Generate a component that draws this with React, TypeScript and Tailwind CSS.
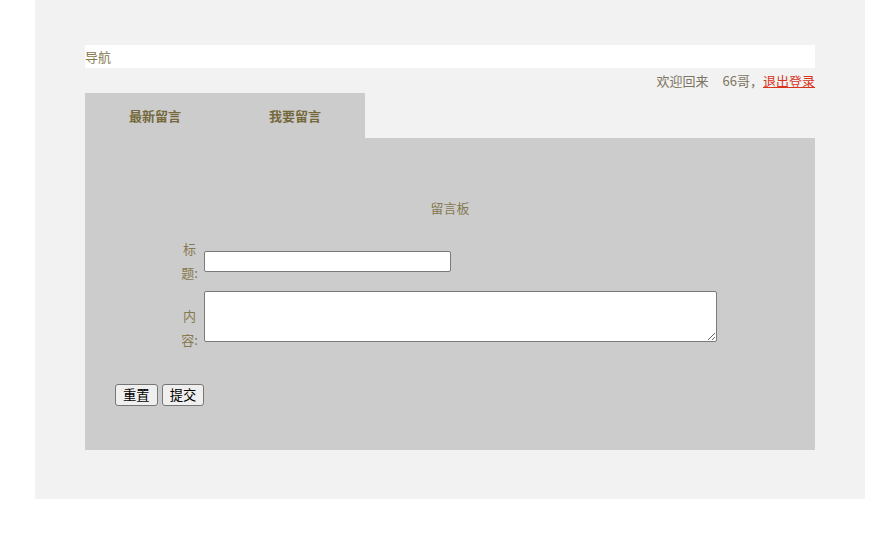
const font = { fontFamily: '"Noto Sans CJK SC", "Microsoft YaHei", sans-serif' };

const tabs = ["最新留言", "我要留言"];

const App = () => {
  return (
    <div className="min-h-[549px] bg-white" style={font}>
      <div className="ml-[35px] w-[830px] bg-[#f2f2f2] px-[50px] pt-[45px] pb-[49px] text-[13px] text-[#86794f]">
        <div className="h-[23px] bg-white leading-[23px]">导航</div>

        <div className="flex h-[25px] items-center justify-end text-[#7d7561]">
          <span>欢迎回来</span>
          <span className="ml-[14px]">66哥，</span>
          <a href="#" className="text-[#d9341c] underline">
            退出登录
          </a>
        </div>

        <div className="flex">
          {tabs.map((t) => (
            <div
              key={t}
              className="flex h-[45px] w-[140px] items-center justify-center bg-[#cccccc] font-bold text-[#75683a]"
            >
              {t}
            </div>
          ))}
        </div>

        <div className="bg-[#cccccc] pt-[60px] pb-[44px]">
          <div className="text-center leading-[20px]">留言板</div>

          <div className="mt-[19px] flex items-center pl-[90px]">
            <div className="w-[29px] text-center leading-[24px]">
              标<br />题:
            </div>
            <input
              type="text"
              className="h-[21px] w-[247px] rounded-[2px] border border-[#7a7a7a] bg-white px-1 text-[13px]"
            />
          </div>

          <div className="mt-[6px] flex items-start pl-[90px]">
            <div className="mt-[13px] w-[29px] text-center leading-[24px]">
              内<br />容:
            </div>
            <textarea className="h-[51px] w-[513px] rounded-[2px] border border-[#7a7a7a] bg-white px-1 text-[13px]" />
          </div>

          <div className="mt-[32px] flex gap-[4px] pl-[30px]">
            <button className="h-[22px] rounded-[3px] border border-[#767676] bg-[#efefef] px-[7px] text-[13.33px] leading-none text-black">
              重置
            </button>
            <button className="h-[22px] rounded-[3px] border border-[#767676] bg-[#efefef] px-[7px] text-[13.33px] leading-none text-black">
              提交
            </button>
          </div>
        </div>
      </div>
    </div>
  );
};

export default App;
